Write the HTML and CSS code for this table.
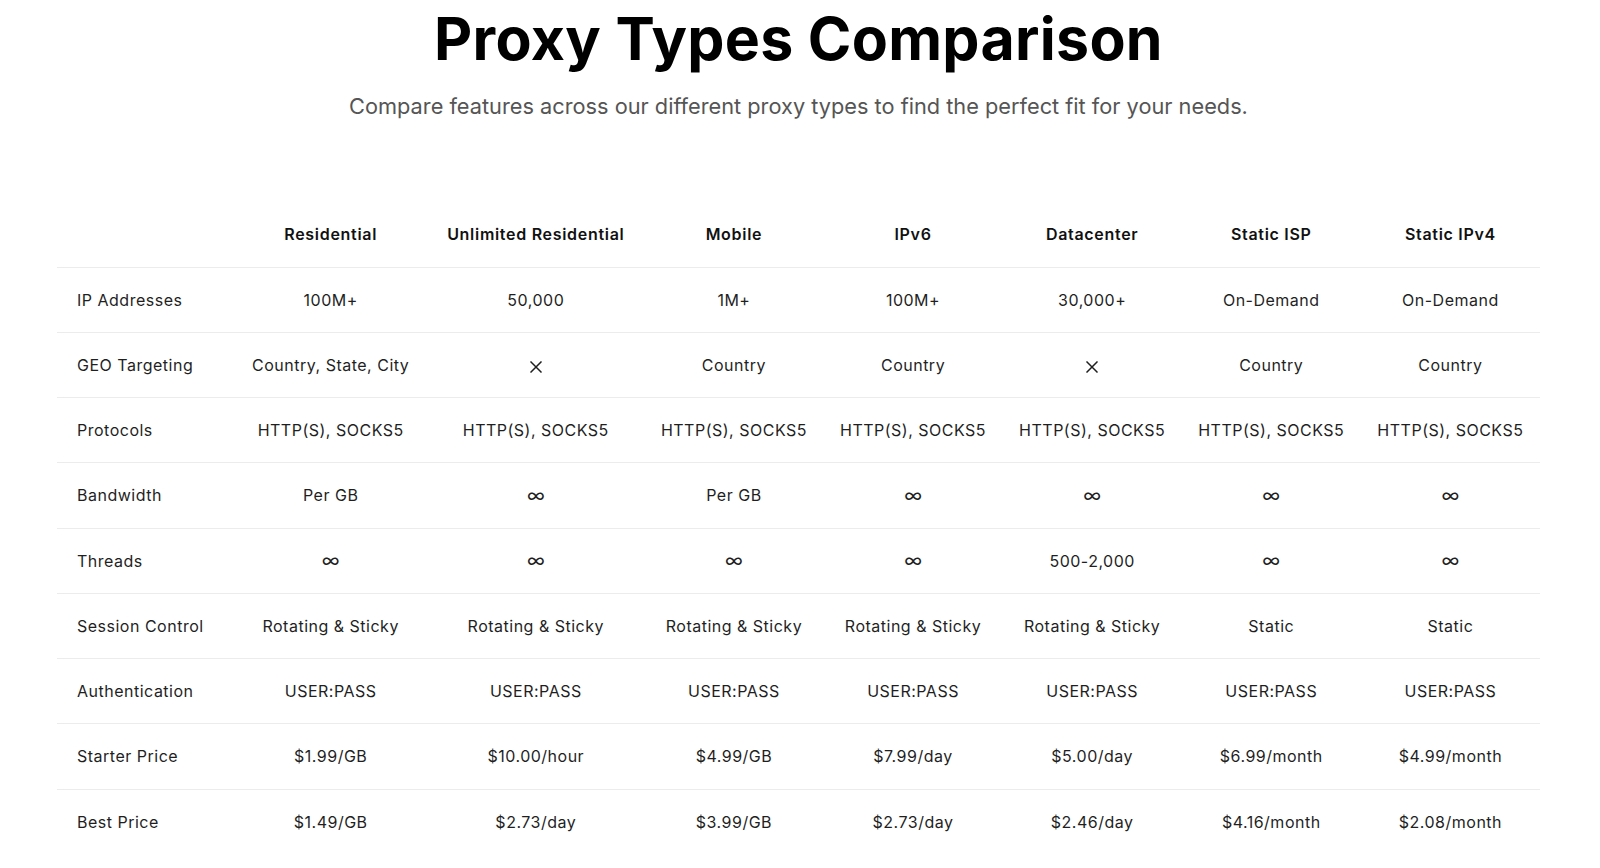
FILE: index.html
```html
<!DOCTYPE html>
<html lang="en">
<head>
<meta charset="utf-8">
<title>Proxy Types Comparison</title>
<link rel="stylesheet" href="styles.css">
</head>
<body>
<main class="page">
  <header class="intro">
    <h1 class="title">Proxy Types Comparison</h1>
    <p class="subtitle">Compare features across our different proxy types to find the perfect fit for your needs.</p>
  </header>
  <table class="compare">
    <colgroup>
      <col class="c-label">
      <col class="c-res">
      <col class="c-unl">
      <col class="c-std">
      <col class="c-std">
      <col class="c-std">
      <col class="c-std">
      <col class="c-std">
    </colgroup>
    <thead>
      <tr>
        <th></th>
        <th>Residential</th>
        <th>Unlimited Residential</th>
        <th>Mobile</th>
        <th>IPv6</th>
        <th>Datacenter</th>
        <th>Static ISP</th>
        <th>Static IPv4</th>
      </tr>
    </thead>
    <tbody>
      <tr><td>IP Addresses</td><td>100M+</td><td>50,000</td><td>1M+</td><td>100M+</td><td>30,000+</td><td>On-Demand</td><td>On-Demand</td></tr>
      <tr><td>GEO Targeting</td><td>Country, State, City</td><td><svg class="cross" viewBox="0 0 12 12" aria-label="No"><path d="M1 1 L11 11 M11 1 L1 11"/></svg></td><td>Country</td><td>Country</td><td><svg class="cross" viewBox="0 0 12 12" aria-label="No"><path d="M1 1 L11 11 M11 1 L1 11"/></svg></td><td>Country</td><td>Country</td></tr>
      <tr><td>Protocols</td><td>HTTP(S), SOCKS5</td><td>HTTP(S), SOCKS5</td><td>HTTP(S), SOCKS5</td><td>HTTP(S), SOCKS5</td><td>HTTP(S), SOCKS5</td><td>HTTP(S), SOCKS5</td><td>HTTP(S), SOCKS5</td></tr>
      <tr><td>Bandwidth</td><td>Per GB</td><td class="inf">&infin;</td><td>Per GB</td><td class="inf">&infin;</td><td class="inf">&infin;</td><td class="inf">&infin;</td><td class="inf">&infin;</td></tr>
      <tr><td>Threads</td><td class="inf">&infin;</td><td class="inf">&infin;</td><td class="inf">&infin;</td><td class="inf">&infin;</td><td>500-2,000</td><td class="inf">&infin;</td><td class="inf">&infin;</td></tr>
      <tr><td>Session Control</td><td>Rotating &amp; Sticky</td><td>Rotating &amp; Sticky</td><td>Rotating &amp; Sticky</td><td>Rotating &amp; Sticky</td><td>Rotating &amp; Sticky</td><td>Static</td><td>Static</td></tr>
      <tr><td>Authentication</td><td>USER:PASS</td><td>USER:PASS</td><td>USER:PASS</td><td>USER:PASS</td><td>USER:PASS</td><td>USER:PASS</td><td>USER:PASS</td></tr>
      <tr><td>Starter Price</td><td>$1.99/GB</td><td>$10.00/hour</td><td>$4.99/GB</td><td>$7.99/day</td><td>$5.00/day</td><td>$6.99/month</td><td>$4.99/month</td></tr>
      <tr><td>Best Price</td><td>$1.49/GB</td><td>$2.73/day</td><td>$3.99/GB</td><td>$2.73/day</td><td>$2.46/day</td><td>$4.16/month</td><td>$2.08/month</td></tr>
    </tbody>
  </table>
</main>
</body>
</html>
```

FILE: styles.css
```css
* { box-sizing: border-box; }

html, body {
  margin: 0;
  padding: 0;
  background: #ffffff;
}

body {
  font-family: Inter, "Liberation Sans", Arial, sans-serif;
  color: #1a1a1a;
}

.page {
  padding: 3px 60px 0 57px;
}

.intro {
  display: flex;
  flex-direction: column;
  align-items: center;
}

.title {
  margin: 0;
  font-size: 59px;
  line-height: 72px;
  font-weight: 700;
  color: #000;
  letter-spacing: 0.3px;
}

.subtitle {
  margin: 17px 0 0;
  font-size: 21.75px;
  line-height: 28px;
  color: #555;
}

.compare {
  margin-top: 82px;
  width: 1483px;
  border-collapse: collapse;
  table-layout: fixed;
}

.c-label { width: 177px; }
.c-res { width: 193px; }
.c-unl { width: 217px; }
.c-std { width: 179px; }

.compare th {
  height: 65px;
  padding: 0;
  font-size: 16px;
  font-weight: 600;
  letter-spacing: 0.7px;
  color: #111;
  text-align: center;
  vertical-align: middle;
}

.compare td {
  height: 65.25px;
  padding: 0;
  font-size: 16px;
  letter-spacing: 0.5px;
  color: #1f1f1f;
  text-align: center;
  vertical-align: middle;
  border-top: 1px solid #ececec;
}

.compare td:first-child {
  text-align: left;
  padding-left: 20px;
}

.compare td.inf {
  font-size: 19px;
  letter-spacing: 0;
}

.cross {
  display: inline-block;
  width: 12px;
  height: 12px;
  vertical-align: middle;
  fill: none;
  stroke: #1f1f1f;
  stroke-width: 1.5;
  stroke-linecap: square;
}
```
